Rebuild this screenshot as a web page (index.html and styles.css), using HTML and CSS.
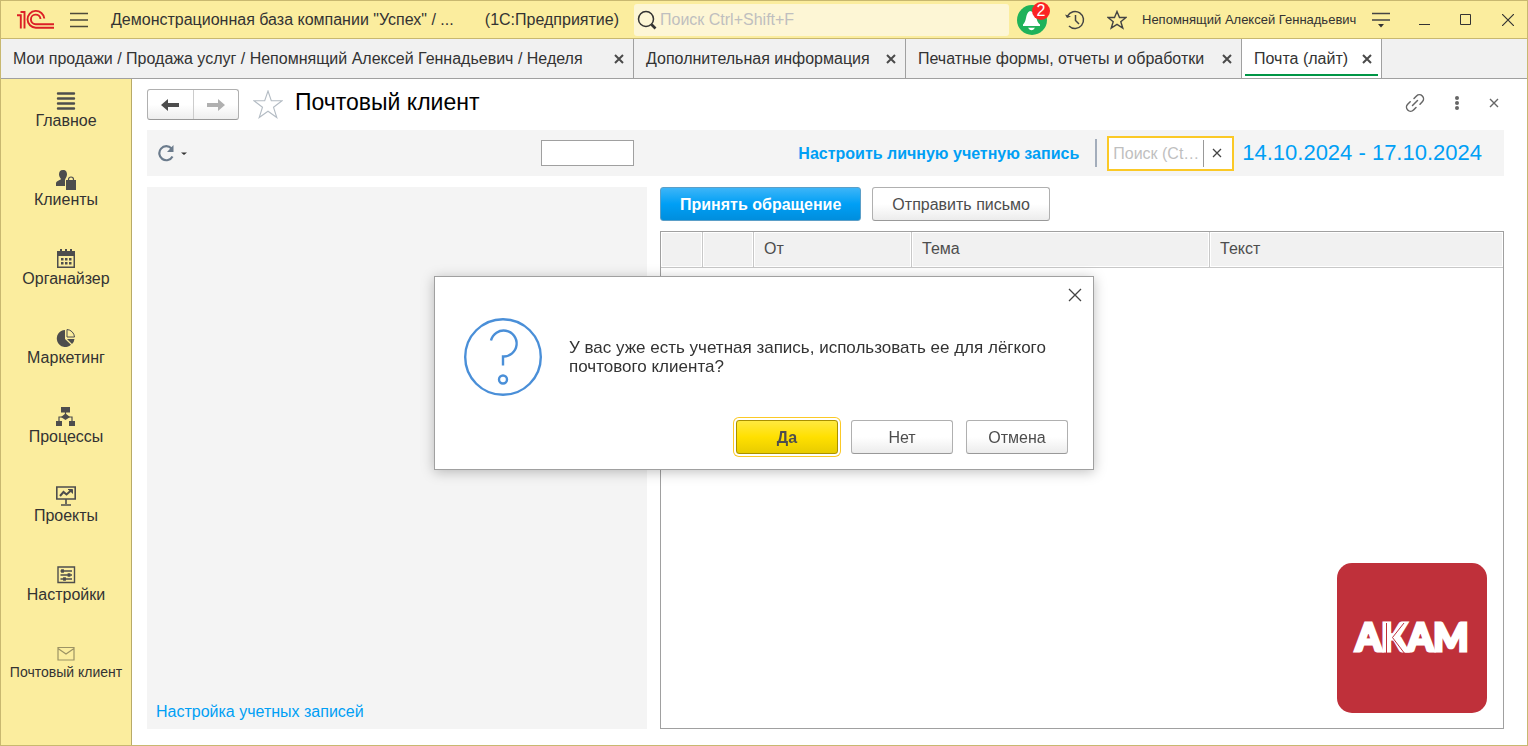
FILE: index.html
```html
<!DOCTYPE html>
<html lang="ru">
<head>
<meta charset="utf-8">
<title>Почтовый клиент</title>
<link rel="stylesheet" href="styles.css">
</head>
<body>
<div class="window">
  <header class="titlebar">
    <svg class="brand" width="40" height="22" viewBox="0 0 40 22" fill="none" stroke="#dc1f26" stroke-width="1.900">
      <path d="M0 6.200h3.800v13.300M3.500 3h4v16.500" />
      <path d="M27.300 9.500A8.400 8.400 0 1 0 18.800 18.700H37" />
      <path d="M23.500 10A4.800 4.800 0 1 0 18.800 15.200H37" />
    </svg>
    <button class="icon-btn menu-btn" aria-label="Меню">
      <svg width="18" height="16" viewBox="0 0 18 16" stroke="#4d4a3a" stroke-width="1.400"><path d="M0 1.500h18M0 8h18M0 14.500h18"/></svg>
    </button>
    <div class="app-title"><span>Демонстрационная база компании "Успех" / ...</span><span>(1С:Предприятие)</span></div>
    <label class="global-search">
      <svg width="20" height="20" viewBox="0 0 20 20" fill="none" stroke="#333"><circle cx="9" cy="9" r="7.500" stroke-width="1.500"/><path d="M14.500 14.500l4 4" stroke-width="2.600"/></svg>
      <input type="text" placeholder="Поиск Ctrl+Shift+F" aria-label="Поиск">
    </label>
    <div class="tools">
      <button class="icon-btn bell" aria-label="Уведомления">
        <svg width="30" height="30" viewBox="0 0 30 30"><circle cx="15" cy="15" r="15" fill="#1fb25a"/><path d="M13 6c-2.500 1-3.500 4-4 7-.500 3-1.500 5-3 6.500V21h17v-1.500c-2-1.500-3-3.500-3.500-6.500-.500-3-2-6-6.500-7zM11 22.800h7q-3.500 5-7 0z" fill="#fff"/></svg>
        <span class="badge">2</span>
      </button>
      <button class="icon-btn history" aria-label="История">
        <svg width="20" height="20" viewBox="0 0 20 20" fill="none" stroke="#444" stroke-width="1.500"><path d="M2.500 6A8.500 8.500 0 1 1 4 16"/><path d="M10.500 5v5.500l3.500 3.500"/><path d="M0 4.500l2 3.500 4-1.500z" fill="#444" stroke="none"/></svg>
      </button>
      <button class="icon-btn fav" aria-label="Избранное">
        <svg width="20" height="20" viewBox="0 0 20 20" fill="none" stroke="#444" stroke-width="1.400"><path d="M10 1.500l2.500 6h6.500l-5.200 4.200 2 6.500L10 14.400l-5.800 3.800 2-6.500L1 7.500h6.500z"/></svg>
      </button>
      <button class="user">Непомнящий Алексей Геннадьевич</button>
      <button class="icon-btn dropdown" aria-label="Сервис">
        <svg width="20" height="16" viewBox="0 0 20 16" stroke="#444" stroke-width="1.400"><path d="M1 1.500h18M1 8h18"/><path d="M7 12h6l-3 3.500z" fill="#333" stroke="none"/></svg>
      </button>
    </div>
    <div class="window-controls">
      <button class="icon-btn" aria-label="Свернуть"><svg width="12" height="12" viewBox="0 0 12 12" stroke="#333"><path d="M1 10.500h11"/></svg></button>
      <button class="icon-btn" aria-label="Развернуть"><svg width="12" height="12" viewBox="0 0 12 12" stroke="#333" fill="none"><path d="M.500 .500h10v10H.500z"/></svg></button>
      <button class="icon-btn" aria-label="Закрыть окно"><svg width="12" height="12" viewBox="0 0 12 12" stroke="#333" stroke-width="1.200"><path d="M0 0l12 12M12 0L0 12"/></svg></button>
    </div>
  </header>

  <nav class="tabs">
    <div class="tab tab-sales"><a href="#">Мои продажи / Продажа услуг / Непомнящий Алексей Геннадьевич / Неделя</a><button class="tab-close" aria-label="Закрыть"><svg width="10" height="10" viewBox="0 0 10 10"><path d="M1 1l8 8M9 1L1 9"/></svg></button></div>
    <div class="tab tab-info"><a href="#">Дополнительная информация</a><button class="tab-close" aria-label="Закрыть"><svg width="10" height="10" viewBox="0 0 10 10"><path d="M1 1l8 8M9 1L1 9"/></svg></button></div>
    <div class="tab tab-forms"><a href="#">Печатные формы, отчеты и обработки</a><button class="tab-close" aria-label="Закрыть"><svg width="10" height="10" viewBox="0 0 10 10"><path d="M1 1l8 8M9 1L1 9"/></svg></button></div>
    <div class="tab tab-mail active"><a href="#">Почта (лайт)</a><button class="tab-close" aria-label="Закрыть"><svg width="10" height="10" viewBox="0 0 10 10"><path d="M1 1l8 8M9 1L1 9"/></svg></button></div>
  </nav>

  <div class="body">
    <nav class="sidebar">
      <a class="section" href="#"><svg width="20" height="20" viewBox="0 0 20 20" stroke="#4d4d4d" stroke-width="2.400" stroke-linecap="round"><path d="M2 2.500h16M2 7.500h16M2 12.500h16M2 17.500h16"/></svg>Главное</a>
      <a class="section" href="#"><svg width="20" height="20" viewBox="0 0 20 20" fill="#4d4d4d"><path d="M7 0c-3 0-4 2-4 4.500S4.500 8 5 9c0 1-4.500 1.500-5 4v3h9v-6c0-1 2-3 2-5.500S10 0 7 0zM10 10h10v10H10z"/><path d="M12.500 11V9.500a2.500 2.500 0 0 1 5 0V11" fill="none" stroke="#4d4d4d" stroke-width="1.200"/></svg>Клиенты</a>
      <a class="section" href="#"><svg width="20" height="20" viewBox="0 0 20 20" fill="#4d4d4d"><path d="M1 2h3V0h2v2h3V0h2v2h3V0h2v2h3v17H1zm1.500 5v10.500h15V7z" fill-rule="evenodd"/><path d="M5 9h2.500v2.500H5zM9 9h2.500v2.500H9zM13 9h2.500v2.500H13zM5 13h2.500v2.500H5zM9 13h2.500v2.500H9zM13 13h2.500v2.500H13z"/></svg>Органайзер</a>
      <a class="section" href="#"><svg width="20" height="20" viewBox="0 0 20 20"><path d="M9 2a8.500 8.500 0 1 0 6 14.800L9 11z" fill="#4d4d4d"/><path d="M11 1.500V9h7.500A8 8 0 0 0 11 1.500z" fill="none" stroke="#4d4d4d"/><path d="M11 11h7.500a8 8 0 0 1-2.500 5z" fill="#4d4d4d"/></svg>Маркетинг</a>
      <a class="section" href="#"><svg width="20" height="20" viewBox="0 0 20 20" fill="#4d4d4d"><path d="M5 0h9v5.500H5zM0 14h6v5H0zM13 14h6v5h-6zM9.500 6.500L14 10l-4.500 3L5 10z"/><path d="M9.500 5v5M3 14v-4h13v4" fill="none" stroke="#4d4d4d" stroke-width="1.200"/></svg>Процессы</a>
      <a class="section" href="#"><svg width="20" height="20" viewBox="0 0 20 20" fill="none" stroke="#4d4d4d" stroke-width="1.600"><path d="M.800 1h18.400v12H.800zM10 13v5M5 19h10"/><path d="M4 10l3.500-4 3 2.500L15 4.500" stroke-width="2"/><path d="M12 3.500h4.500v4" fill="#4d4d4d" stroke-width="1"/></svg>Проекты</a>
      <a class="section" href="#"><svg width="20" height="20" viewBox="0 0 20 20" fill="none" stroke="#4d4d4d" stroke-width="1.400"><path d="M2 2h16.500v15.500H2zM4.500 6h11.500M4.500 10h11.500M4.500 14h11.500"/><path d="M6.500 4.200v3.600M13 8.200v3.600M8.500 12.200v3.600" stroke-width="2.800"/></svg>Настройки</a>
      <a class="section section-mail" href="#"><svg width="20" height="20" viewBox="0 0 20 20" fill="none" stroke="#9c9364" stroke-width="1.200"><path d="M2 3.500h16v12.500H2zM2 4.500l8 5.500 8-5.500"/></svg>Почтовый клиент</a>
    </nav>

    <main class="page">
      <div class="page-head">
        <div class="history-nav">
          <button aria-label="Назад"><svg width="18" height="14" viewBox="0 0 18 14"><path d="M0 7l7-6v4h11v4H7v4z" fill="#4d4d4d"/></svg></button>
          <button aria-label="Вперёд"><svg width="18" height="14" viewBox="0 0 18 14"><path d="M18 7l-7-6v4H0v4h11v4z" fill="#b0b0b0"/></svg></button>
        </div>
        <button class="icon-btn page-star" aria-label="В избранное"><svg width="30" height="30" viewBox="0 0 30 30" fill="none" stroke="#b4bcc4" stroke-width="1.100"><path d="M15 1l3.300 9.700H29l-8.500 6.500 3.300 10.300L15 21.200l-8.800 6.300 3.300-10.300L1 10.700h10.700z"/></svg></button>
        <h1>Почтовый клиент</h1>
        <div class="page-tools">
          <button class="icon-btn" aria-label="Получить ссылку"><svg width="20" height="20" viewBox="0 0 20 20" fill="none" stroke="#666" stroke-width="1.500" stroke-linecap="round"><path d="M7.500 12.500l5-5M9 5.500l2.500-2.500a4 4 0 0 1 5.800 5.800L15 11.200M11 14.500L8.500 17a4 4 0 0 1-5.800-5.800L5.200 8.800"/></svg></button>
          <button class="icon-btn" aria-label="Ещё"><svg width="6" height="16" viewBox="0 0 6 16" fill="#666"><circle cx="3" cy="3" r="2"/><circle cx="3" cy="8" r="2"/><circle cx="3" cy="13" r="2"/></svg></button>
          <button class="icon-btn" aria-label="Закрыть страницу"><svg width="10" height="10" viewBox="0 0 10 10" stroke="#666" stroke-width="1.400"><path d="M1 1l8 8M9 1L1 9"/></svg></button>
        </div>
      </div>

      <div class="toolbar">
        <button class="icon-btn refresh" aria-label="Обновить"><svg width="30" height="18" viewBox="0 0 30 18"><path d="M14.500 12.500A7 7 0 1 1 13.500 4.500" fill="none" stroke="#6b7b8c" stroke-width="2.200"/><path d="M15.500 1v7H9z" fill="#6b7b8c"/><path d="M23 8.500h6L26 11z" fill="#333"/></svg></button>
        <input class="blank-field" type="text" aria-label="Отбор">
        <a class="personal-link" href="#">Настроить личную учетную запись</a>
        <span class="divider"></span>
        <div class="mail-search">
          <input type="text" placeholder="Поиск (Ctrl+F)" aria-label="Поиск писем">
          <button aria-label="Очистить"><svg width="10" height="10" viewBox="0 0 10 10" stroke="#444" stroke-width="1.300"><path d="M1 1l8 8M9 1L1 9"/></svg></button>
        </div>
        <a class="period" href="#">14.10.2024 - 17.10.2024</a>
      </div>

      <div class="content">
        <aside class="folders"><a href="#">Настройка учетных записей</a></aside>
        <section class="letters">
          <div class="commands">
            <button class="btn btn-blue">Принять обращение</button>
            <button class="btn">Отправить письмо</button>
          </div>
          <div class="list">
            <table>
              <colgroup><col class="c-flag"><col class="c-clip"><col class="c-from"><col class="c-subject"><col></colgroup>
              <thead><tr><th></th><th></th><th>От</th><th>Тема</th><th>Текст</th></tr></thead>
            </table>
            <svg class="logo" width="150" height="150" viewBox="0 0 150 150" role="img" aria-label="АКАМ">
              <rect width="150" height="150" rx="15" fill="#bf303a"/>
              <text x="75" y="88" text-anchor="middle" class="logo-text">АКАМ</text>
              <path d="M49.500 60v30M67 60L55.500 74.500L68 91" fill="none" stroke="#bf303a"/>
            </svg>
          </div>
        </section>
      </div>
    </main>
  </div>
</div>

<div class="overlay">
  <div class="dialog" role="dialog" aria-modal="true" aria-labelledby="question">
    <button class="icon-btn dialog-close" aria-label="Закрыть"><svg width="14" height="14" viewBox="0 0 14 14" stroke="#444" stroke-width="1.300"><path d="M1 1l12 12M13 1L1 13"/></svg></button>
    <div class="dialog-body">
      <svg width="78" height="78" viewBox="0 0 78 78" fill="none" stroke="#4a8fd8" stroke-width="2.400"><circle cx="39" cy="39" r="37.800"/><path d="M27 22.500A13 13 0 1 1 39 38.500v9"/><circle cx="39" cy="61.500" r="4"/></svg>
      <p id="question">У вас уже есть учетная запись, использовать ее для лёгкого почтового клиента?</p>
    </div>
    <div class="dialog-actions">
      <button class="btn btn-yellow">Да</button>
      <button class="btn">Нет</button>
      <button class="btn">Отмена</button>
    </div>
  </div>
</div>
</body>
</html>
```

FILE: styles.css
```css
* { box-sizing: border-box; }
body {
  margin: 0;
  font: 16px/19px "Liberation Sans", Arial, sans-serif;
  color: #333;
}
button, input { font: inherit; color: inherit; }
button { cursor: pointer; }
a { color: inherit; text-decoration: none; }
svg { display: block; flex: none; }
.icon-btn { display: flex; padding: 0; border: 0; background: none; }

.window {
  display: flex;
  flex-direction: column;
  height: 100vh;
  border: 1px solid #c8b870;
  background: #fff;
}

/* Title bar */
.titlebar {
  display: flex;
  align-items: center;
  height: 38px;
  flex: none;
  padding-left: 16px;
  background: #fbed9e;
  border-bottom: 1px solid #c8b870;
}
.menu-btn { margin: 0 23px 0 13px; }
.app-title { display: flex; justify-content: space-between; width: 523px; padding-right: 15px; white-space: nowrap; }
.global-search {
  display: flex;
  align-items: center;
  flex: 1;
  height: 32px;
  padding-left: 3px;
  gap: 3px;
  background: #fdf6d5;
  border-radius: 3px;
}
.global-search input { flex: 1; min-width: 0; padding: 0; border: 0; outline: 0; background: none; }
::placeholder { color: #bfbfbf; opacity: 1; }
.tools { display: flex; align-items: center; margin-left: 8px; }
.bell { position: relative; }
.badge {
  position: absolute;
  top: -3px;
  right: -3px;
  width: 18px;
  height: 18px;
  border-radius: 50%;
  background: #fb2424;
  color: #fff;
  line-height: 18px;
  text-align: center;
}
.history { margin-left: 18px; }
.fav { margin-left: 22px; }
.user { width: 214px; margin: 0 15px; padding: 0; border: 0; background: none; font-size: 13px; white-space: nowrap; }
.window-controls { display: flex; gap: 30px; margin: 0 13px 0 27px; }

/* Open pages */
.tabs { display: flex; flex: none; height: 40px; background: #f1f1f1; border-bottom: 1px solid #a0a0a0; }
.tab {
  display: flex;
  align-items: center;
  justify-content: space-between;
  padding: 0 9px 0 12px;
  border-right: 1px solid #a0a0a0;
  white-space: nowrap;
}
.tab-sales { width: 633px; }
.tab-info { width: 272px; }
.tab-forms { width: 336px; }
.tab-mail { width: 140px; }
.active { background: linear-gradient(#009646, #009646) center bottom 2px / calc(100% - 6px) 2px no-repeat #fff; }
.tab-close { padding: 0; border: 0; background: none; }
.tab-close path { stroke: #4a4a4a; stroke-width: 2; }

.body { display: flex; flex: 1; min-height: 0; }

/* Sections */
.sidebar { width: 131px; flex: none; padding-top: 12px; background: #fbed9e; border-right: 1px solid #b8aa68; }
.section { display: flex; flex-direction: column; align-items: center; height: 79px; }
.section-mail { font-size: 14px; line-height: 16px; }

/* Page */
.page { display: flex; flex-direction: column; flex: 1; min-width: 0; padding: 0 23px 16px 15px; }
.page-head { display: flex; align-items: center; height: 51px; flex: none; }
.history-nav {
  display: flex;
  width: 92px;
  height: 31px;
  border: 1px solid #b0b0b0;
  border-bottom-color: #999;
  border-radius: 3px;
  background: linear-gradient(#fff 50%, #eee);
}
.history-nav button { display: flex; flex: 1; align-items: center; justify-content: center; padding: 0; border: 0; background: none; }
.history-nav button + button { border-left: 1px solid #ccc; }
.page-star { margin: 0 12px 0 14px; }
h1 { margin: 0; padding-bottom: 5px; font-size: 23px; font-weight: 400; line-height: 28px; color: #000; }
.page-tools { display: flex; align-items: center; gap: 29px; margin: 0 5px 0 auto; padding-bottom: 3px; }

.toolbar { display: flex; align-items: center; height: 46px; flex: none; padding: 0 22px 0 11px; background: #f4f4f4; }
.blank-field { width: 93px; height: 26px; margin-left: 353px; padding: 0 4px; border: 1px solid #a0a0a0; background: #fff; }
.personal-link { margin-left: auto; color: #009ff5; font-weight: 700; white-space: nowrap; }
.divider { width: 2px; height: 28px; margin: 0 10px 0 16px; background: #a3adbb; }
.mail-search { display: flex; width: 127px; height: 35px; padding: 2px; border: 2px solid #fbc926; background: #fff; }
.mail-search input { flex: 1; min-width: 0; padding: 0 0 0 2px; border: 0; border-right: 1px solid #999; outline: 0; text-overflow: ellipsis; }
.mail-search button { display: flex; align-items: center; justify-content: center; width: 26px; padding: 0; border: 0; background: none; }
.period { margin-left: 8px; color: #009ff5; font-size: 22px; line-height: 26px; white-space: nowrap; }

.content { display: grid; grid-template-columns: 500fr 844fr; flex: 1; min-height: 0; gap: 13px; padding-top: 11px; }
.folders { display: flex; align-items: flex-end; padding: 8px 9px; background: #f4f4f4; color: #009ff5; }
.letters { display: flex; flex-direction: column; gap: 10px; }
.commands { display: flex; gap: 11px; }

.btn {
  height: 34px;
  padding: 0 19px;
  border: 1px solid #b0b0b0;
  border-bottom-color: #999;
  border-radius: 3px;
  background: linear-gradient(#fff 50%, #ececec);
  color: #4d4d4d;
  white-space: nowrap;
}
.btn-blue { border-color: #5b9fc8; background: linear-gradient(#3db5f8, #009ff5 50%, #008edd); color: #fff; font-weight: 700; }
.btn-yellow {
  border-color: #a89000;
  background: linear-gradient(#ffe940, #ffe000 50%, #e8cc00);
  box-shadow: 0 0 0 2px #fff, 0 0 0 3px #fbc926;
  font-weight: 700;
}

.list { position: relative; flex: 1; border: 1px solid #a0a0a0; }
table { width: 100%; table-layout: fixed; border-collapse: separate; border-spacing: 0; }
.c-flag { width: 42px; }
.c-clip { width: 51px; }
.c-from { width: 158px; }
.c-subject { width: 298px; }
th {
  height: 36px;
  padding: 0 10px 2px;
  border-right: 1px solid #c8c8c8;
  border-bottom: 1px solid #c8c8c8;
  background: #f1f1f1;
  box-shadow: inset 0 0 0 1px #fff;
  color: #4d4d4d;
  font-weight: 400;
  text-align: left;
}
th:last-child { border-right: 0; }
.logo { position: absolute; right: 16px; bottom: 15px; }
.logo-text { font: 900 37px Lato, sans-serif; fill: #fff; stroke: #fff; stroke-width: 3px; }

/* Question dialog */
.overlay { position: fixed; inset: 0; display: flex; align-items: center; justify-content: center; }
.dialog {
  position: relative;
  width: 660px;
  padding: 41px 25px 15px 29px;
  border: 1px solid #a0a0a0;
  background: #fff;
  box-shadow: 0 2px 12px rgba(0, 0, 0, .25);
}
.dialog-close { position: absolute; top: 11px; right: 11px; }
.dialog-body { display: flex; align-items: center; gap: 27px; }
.dialog-body p { flex: 1; margin: 0; padding-right: 20px; font-size: 17px; }
.dialog-actions { display: flex; justify-content: flex-end; gap: 13px; margin-top: 24px; }
.dialog-actions .btn { width: 102px; }
```
